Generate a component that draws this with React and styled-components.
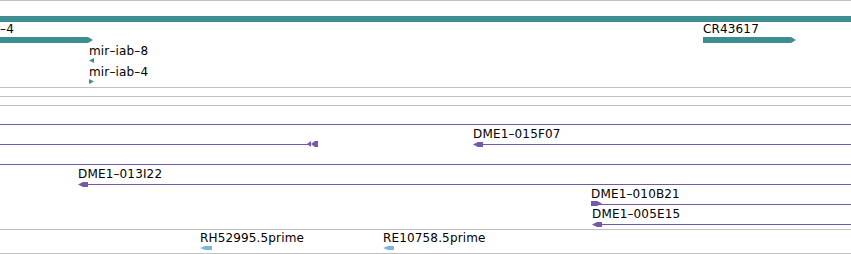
import React from 'react';
import styled, { createGlobalStyle } from 'styled-components';

const GRAY = '#c0c0c0';
const TEAL = '#3e8d92';
const PURPLE = '#7558a9';
const BLUE = '#80b3dc';

const Global = createGlobalStyle`
  html, body { margin: 0; padding: 0; background: #fff; }
  body { width: 851px; height: 254px; overflow: hidden; font-family: "DejaVu Sans", sans-serif; }
`;

const Panel = styled.div`
  width: 851px;
  display: flex;
  flex-direction: column;
  border-top: 1px solid ${GRAY};
`;

const Track = styled.div`
  position: relative;
  height: ${(p) => p.$h}px;
  border-bottom: 1px solid ${GRAY};
  overflow: hidden;
`;

const Label = styled.span`
  position: absolute;
  font: 12px/14px "DejaVu Sans", sans-serif;
  letter-spacing: 0.15px;
  color: #000;
  white-space: nowrap;
`;

const Rule = styled.div`
  position: absolute;
  height: 1px;
  background: ${(p) => p.$color};
`;

const Glyph = styled.svg`
  position: absolute;
  display: block;
  overflow: visible;
`;

const Shape = ({ x, y, w, h, points, color }) => (
  <Glyph style={{ left: x, top: y }} width={w} height={h} viewBox={`0 0 ${w} ${h}`}>
    {points.map((p, i) => (
      <polygon key={i} points={p} fill={color} />
    ))}
  </Glyph>
);

const barRight = (w, h) => [`0,0 ${w - 5},0 ${w},${h / 2} ${w - 5},${h} 0,${h}`];
const barPlain = (w, h) => [`0,0 ${w},0 ${w},${h} 0,${h}`];
const headLeft = (w, h) => [`0,${h / 2} 5,0 ${w},0 ${w},${h} 5,${h}`];
const headRight = (w, h) => [`0,0 ${w - 5},0 ${w},${h / 2} ${w - 5},${h} 0,${h}`];
const triLeft = [`0,2.5 5,0 5,5`];
const triRight = [`0,0 5,2.5 0,5`];
const doubleLeft = [`0,3 4,0 4,6`, `4,3 8,0 11,0 11,6 8,6`];

const geneShapes = [
  { x: 0, y: 15, w: 851, h: 6, points: barPlain(851, 6) },
  { x: 0, y: 36, w: 93, h: 6, points: barRight(93, 6) },
  { x: 703, y: 36, w: 93, h: 6, points: barRight(93, 6) },
  { x: 89, y: 57, w: 5, h: 5, points: triLeft },
  { x: 89, y: 78, w: 5, h: 5, points: triRight },
];

const geneLabels = [
  { x: 0, y: 21, text: '–4' },
  { x: 703, y: 21, text: 'CR43617' },
  { x: 89, y: 43, text: 'mir–iab–8' },
  { x: 89, y: 64, text: 'mir–iab–4' },
];

const cloneRules = [
  { x: 0, y: 18, w: 851 },
  { x: 0, y: 38, w: 310 },
  { x: 476, y: 38, w: 375 },
  { x: 0, y: 58, w: 851 },
  { x: 80, y: 78, w: 771 },
  { x: 596, y: 98, w: 255 },
  { x: 596, y: 118, w: 255 },
];

const cloneShapes = [
  { x: 307, y: 35, w: 11, h: 6, points: doubleLeft },
  { x: 473, y: 36, w: 10, h: 5, points: headLeft(10, 5) },
  { x: 78, y: 76, w: 10, h: 5, points: headLeft(10, 5) },
  { x: 591, y: 95, w: 11, h: 5, points: headRight(11, 5) },
  { x: 592, y: 116, w: 10, h: 5, points: headLeft(10, 5) },
];

const cloneLabels = [
  { x: 473, y: 21, text: 'DME1–015F07' },
  { x: 78, y: 61, text: 'DME1–013I22' },
  { x: 591, y: 81, text: 'DME1–010B21' },
  { x: 592, y: 101, text: 'DME1–005E15' },
];

const estShapes = [
  { x: 200, y: 16, w: 12, h: 4, points: headLeft(12, 4) },
  { x: 383, y: 16, w: 11, h: 4, points: headLeft(11, 4) },
];

const estLabels = [
  { x: 200, y: 1, text: 'RH52995.5prime' },
  { x: 383, y: 1, text: 'RE10758.5prime' },
];

const renderLabels = (labels) =>
  labels.map((l) => (
    <Label key={l.text} style={{ left: l.x, top: l.y }}>
      {l.text}
    </Label>
  ));

const renderShapes = (shapes, color) =>
  shapes.map((s, i) => <Shape key={i} {...s} color={color} />);

export default function App() {
  return (
    <>
      <Global />
      <Panel>
        <Track $h={86}>
          {renderShapes(geneShapes, TEAL)}
          {renderLabels(geneLabels)}
        </Track>
        <Track $h={8} />
        <Track $h={8} />
        <Track $h={123}>
          {cloneRules.map((r, i) => (
            <Rule key={i} $color={PURPLE} style={{ left: r.x, top: r.y, width: r.w }} />
          ))}
          {renderShapes(cloneShapes, PURPLE)}
          {renderLabels(cloneLabels)}
        </Track>
        <Track $h={23}>
          {renderShapes(estShapes, BLUE)}
          {renderLabels(estLabels)}
        </Track>
      </Panel>
    </>
  );
}
